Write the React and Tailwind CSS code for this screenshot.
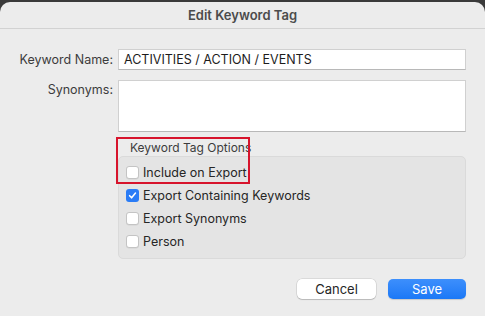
import React from "react";

const options = [
  { label: "Include on Export", checked: false },
  { label: "Export Containing Keywords", checked: true },
  { label: "Export Synonyms", checked: false },
  { label: "Person", checked: false },
];

const Checkbox = ({ checked }) =>
  checked ? (
    <span className="flex h-[13px] w-[13px] shrink-0 items-center justify-center rounded-[3px] bg-[#2a7cf6]">
      <svg width="9" height="9" viewBox="0 0 10 10" fill="none">
        <path d="M1.8 5.2 L4 7.6 L8.3 2.2" stroke="white" strokeWidth="1.7" strokeLinecap="round" strokeLinejoin="round" />
      </svg>
    </span>
  ) : (
    <span className="h-[13px] w-[13px] shrink-0 rounded-[3px] border border-[#c4c4c4] bg-white shadow-[0_0.5px_0.5px_rgba(0,0,0,0.08)]" />
  );

const App = () => {
  return (
    <div className="h-[316px] w-[485px] overflow-hidden bg-[#3a3a3a] font-['Inter','Liberation_Sans',sans-serif] text-[12.5px] leading-[16px]">
      <div className="mt-[2px] flex h-[314px] flex-col rounded-t-[10px] bg-[#ececec]">
        <div className="flex h-[27px] shrink-0 items-center justify-center border-b border-[#d2d2d2] text-[13px] font-semibold text-[#4b4b4b]">
          Edit Keyword Tag
        </div>

        <div className="flex flex-col pl-[18px] pr-[19px] pt-[20px]">
          <div className="flex items-center">
            <label className="w-[95px] shrink-0 whitespace-nowrap text-right text-[#3c3c3c]">Keyword Name:</label>
            <div className="ml-[5px] flex h-[21px] flex-1 items-center whitespace-nowrap border border-[#d0d0d0] border-b-[#b8b8b8] bg-white px-[5px] text-[#1c1c1c]">
              ACTIVITIES / ACTION / EVENTS
            </div>
          </div>

          <div className="mt-[10px] flex items-start">
            <label className="mt-[2px] w-[95px] shrink-0 whitespace-nowrap text-right text-[#3c3c3c]">Synonyms:</label>
            <div className="ml-[5px] h-[52px] flex-1 border border-[#d0d0d0] border-b-[#b8b8b8] bg-white" />
          </div>

          <div className="relative ml-[100px] mt-[8px]">
            <div className="pl-[12px] text-[12px] text-[#3c3c3c]">Keyword Tag Options</div>
            <div className="flex h-[103px] flex-col rounded-[5px] border border-[#dadada] bg-[#e4e4e4] pl-[7px] pt-[4px]">
              {options.map((o) => (
                <div key={o.label} className="flex h-[23px] items-center gap-[4px] whitespace-nowrap text-[#262626]">
                  <Checkbox checked={o.checked} />
                  <span>{o.label}</span>
                </div>
              ))}
            </div>
            <div className="absolute left-[-2px] top-[-3px] h-[47px] w-[134px] border-2 border-[#d7142c]" />
          </div>

          <div className="mt-[20px] flex justify-end gap-[12px]">
            <button className="h-[20px] w-[79px] rounded-[5px] bg-white text-[13px] text-[#262626] shadow-[0_0_0_0.5px_rgba(0,0,0,0.15),0_1px_1px_rgba(0,0,0,0.15)]">
              Cancel
            </button>
            <button className="h-[20px] w-[78px] rounded-[5px] bg-gradient-to-b from-[#3d8ffc] to-[#1a78f6] text-[13px] text-white shadow-[0_1px_1px_rgba(0,0,0,0.15)]">
              Save
            </button>
          </div>
        </div>
      </div>
    </div>
  );
};

export default App;
